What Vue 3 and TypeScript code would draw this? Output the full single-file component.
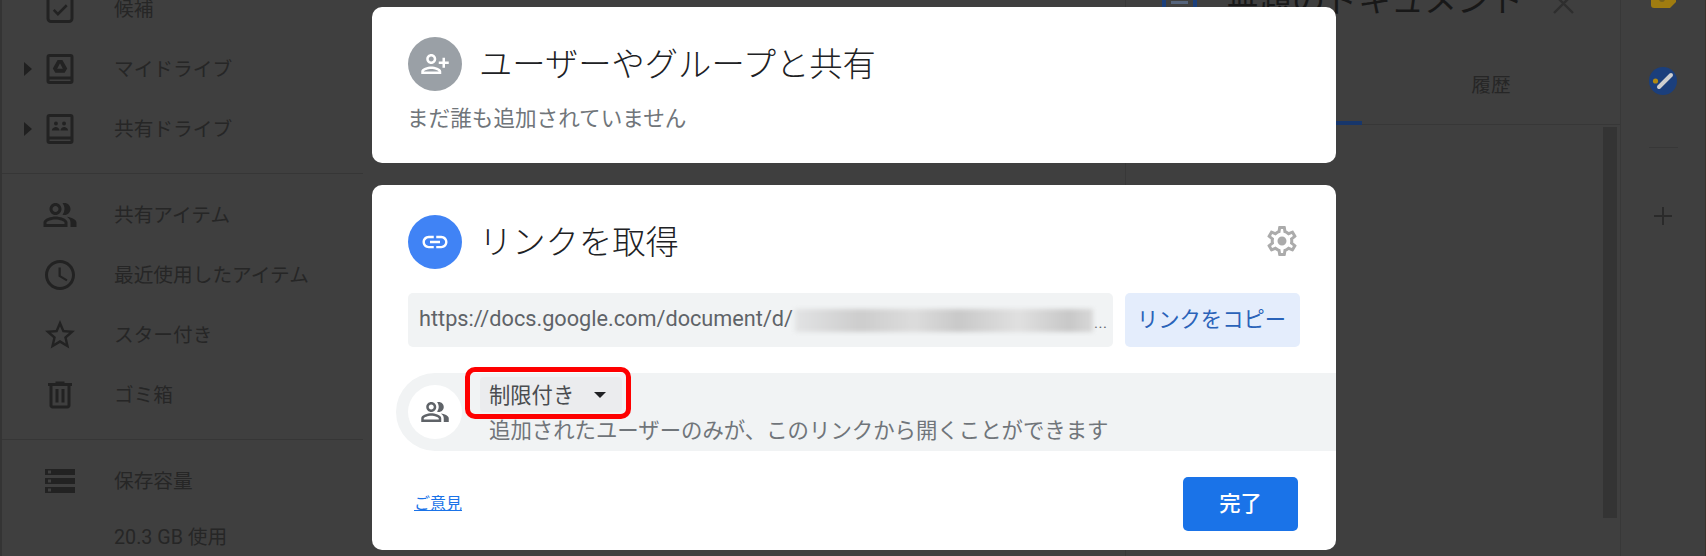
<script setup lang="ts">
interface NavRow {
  label: string
  icon: string
  caret?: boolean
}

const checkIcon =
  'M6 2.6h12a3 3 0 0 1 3 3v12.8a3 3 0 0 1-3 3H6a3 3 0 0 1-3-3V5.6a3 3 0 0 1 3-3zm0 2a1 1 0 0 0-1 1v12.8a1 1 0 0 0 1 1h12a1 1 0 0 0 1-1V5.6a1 1 0 0 0-1-1H6zm4.6 9.6l5.3-5.3 1.2 1.2-6.5 6.5-3.4-3.4 1.2-1.2z'
const driveBox =
  'M5 2h14a2 2 0 0 1 2 2v16a2 2 0 0 1-2 2H5a2 2 0 0 1-2-2V4a2 2 0 0 1 2-2zm0 2v13h14V4H5zm0 15v1h14v-1H5z'
const myDriveIcon = driveBox + 'M10.4 6h3.2l3.2 5.7-1.7 2.8H8.9l-1.7-2.8zM12 8.2l-1.9 3.6h3.8z'
const sharedDriveIcon =
  driveBox +
  'M9.3 7a1.3 1.3 0 1 1 0 2.6 1.3 1.3 0 0 1 0-2.6zm5.4 0a1.3 1.3 0 1 1 0 2.6 1.3 1.3 0 0 1 0-2.6zM6.6 13c0-1.5 1.8-2.3 2.7-2.3s2.4.8 2.4 2.3zm5.7 0c0-1.5 1.5-2.3 2.4-2.3s2.7.8 2.7 2.3z'
const peopleIcon =
  'M15 8c0-1.42-.5-2.73-1.33-3.76.42-.14.86-.24 1.33-.24 2.21 0 4 1.79 4 4s-1.79 4-4 4c-.43 0-.84-.09-1.23-.21-.03-.01-.06-.02-.1-.03A5.98 5.98 0 0 0 15 8zm1.66 5.13C18.03 14.06 19 15.32 19 17v3h4v-3c0-2.18-3.58-3.47-6.34-3.87zM9 6c-1.1 0-2 .9-2 2s.9 2 2 2 2-.9 2-2-.9-2-2-2m0 9c-2.7 0-5.8 1.29-6 2.01V18h12v-1c-.2-.71-3.3-2-6-2M9 4c2.21 0 4 1.79 4 4s-1.79 4-4 4-4-1.79-4-4 1.79-4 4-4zm0 9c2.67 0 8 1.34 8 4v3H1v-3c0-2.66 5.33-4 8-4z'
const clockIcon =
  'M11.99 2C6.47 2 2 6.48 2 12s4.47 10 9.99 10C17.52 22 22 17.52 22 12S17.52 2 11.99 2zM12 20c-4.42 0-8-3.58-8-8s3.58-8 8-8 8 3.58 8 8-3.58 8-8 8zm.5-13H11v6l5.25 3.15.75-1.23-4.5-2.67z'
const starIcon =
  'M22 9.24l-7.19-.62L12 2 9.19 8.63 2 9.24l5.46 4.73L5.82 21 12 17.27 18.18 21l-1.63-7.03L22 9.24zM12 15.4l-3.76 2.27 1-4.28-3.32-2.88 4.38-.38L12 6.1l1.71 4.04 4.38.38-3.32 2.88 1 4.28L12 15.4z'
const trashIcon =
  'M15 4V3H9v1H4v2h1v13c0 1.1.9 2 2 2h10c1.1 0 2-.9 2-2V6h1V4h-5zm2 15H7V6h10v13zM9 8h2v9H9zm4 0h2v9h-2z'
const storageIcon =
  'M2 20h20v-4H2v4zm2-3h2v2H4v-2zM2 4v4h20V4H2zm4 3H4V5h2v2zm-4 7h20v-4H2v4zm2-3h2v2H4v-2z'
const personAddIcon =
  'M15 12c2.21 0 4-1.79 4-4s-1.79-4-4-4-4 1.79-4 4 1.79 4 4 4zm0-6c1.1 0 2 .9 2 2s-.9 2-2 2-2-.9-2-2 .9-2 2-2zm0 8c-2.67 0-8 1.34-8 4v2h16v-2c0-2.66-5.33-4-8-4zm-6 4c.22-.72 3.31-2 6-2 2.7 0 5.8 1.29 6 2H9zm-3-3v-3h3v-2H6V7H4v3H1v2h3v3z'
const linkIcon =
  'M3.9 12c0-1.71 1.39-3.1 3.1-3.1h4V7H7c-2.76 0-5 2.24-5 5s2.24 5 5 5h4v-1.9H7c-1.71 0-3.1-1.39-3.1-3.1zM8 13h8v-2H8v2zm9-6h-4v1.9h4c1.71 0 3.1 1.39 3.1 3.1s-1.39 3.1-3.1 3.1h-4V17h4c2.76 0 5-2.24 5-5s-2.24-5-5-5z'
const gearIcon =
  'M19.43 12.98c.04-.32.07-.64.07-.98 0-.34-.03-.66-.07-.98l2.11-1.65c.19-.15.24-.42.12-.64l-2-3.46c-.09-.16-.26-.25-.44-.25-.06 0-.12.01-.17.03l-2.49 1c-.52-.4-1.08-.73-1.69-.98l-.38-2.65C14.46 2.18 14.25 2 14 2h-4c-.25 0-.46.18-.49.42l-.38 2.65c-.61.25-1.17.59-1.69.98l-2.49-1c-.06-.02-.12-.03-.18-.03-.17 0-.34.09-.43.25l-2 3.46c-.13.22-.07.49.12.64l2.11 1.65c-.04.32-.07.65-.07.98 0 .33.03.66.07.98l-2.11 1.65c-.19.15-.24.42-.12.64l2 3.46c.09.16.26.25.44.25.06 0 .12-.01.17-.03l2.49-1c.52.4 1.08.73 1.69.98l.38 2.65c.03.24.24.42.49.42h4c.25 0 .46-.18.49-.42l.38-2.65c.61-.25 1.17-.59 1.69-.98l2.49 1c.06.02.12.03.18.03.17 0 .34-.09.43-.25l2-3.46c.12-.22.07-.49-.12-.64l-2.11-1.65zm-1.98-1.71c.04.31.05.52.05.73 0 .21-.02.43-.05.73l-.14 1.13.89.7 1.08.84-.7 1.21-1.27-.51-1.04-.42-.9.68c-.43.32-.84.56-1.25.73l-1.06.43-.16 1.13-.2 1.35h-1.4l-.19-1.35-.16-1.13-1.06-.43c-.43-.18-.83-.41-1.23-.71l-.91-.7-1.06.43-1.27.51-.7-1.21 1.08-.84.89-.7-.14-1.13c-.03-.31-.05-.54-.05-.74s.02-.43.05-.73l.14-1.13-.89-.7-1.08-.84.7-1.21 1.27.51 1.04.42.9-.68c.43-.32.84-.56 1.25-.73l1.06-.43.16-1.13.2-1.35h1.39l.19 1.35.16 1.13 1.06.43c.43.18.83.41 1.23.71l.91.7 1.06-.43 1.27-.51.7 1.21-1.07.85-.89.7.14 1.13zM12 9a3 3 0 1 1 0 6 3 3 0 0 1 0-6z'

const topRows: NavRow[] = [
  { label: '候補', icon: checkIcon },
  { label: 'マイドライブ', icon: myDriveIcon, caret: true },
  { label: '共有ドライブ', icon: sharedDriveIcon, caret: true },
]
const midRows: NavRow[] = [
  { label: '共有アイテム', icon: peopleIcon },
  { label: '最近使用したアイテム', icon: clockIcon },
  { label: 'スター付き', icon: starIcon },
  { label: 'ゴミ箱', icon: trashIcon },
]
</script>

<template>
  <div class="page">
    <aside class="sidebar">
      <div class="nav-group first">
        <div v-for="row in topRows" :key="row.label" class="nav-row">
          <span class="caret-slot"><i v-if="row.caret" class="caret-right"></i></span>
          <svg class="nav-icon" viewBox="0 0 24 24"><path :d="row.icon" fill-rule="evenodd" /></svg>
          <span>{{ row.label }}</span>
        </div>
      </div>
      <div class="divider"></div>
      <div class="nav-group">
        <div v-for="row in midRows" :key="row.label" class="nav-row">
          <span class="caret-slot"></span>
          <svg class="nav-icon" viewBox="0 0 24 24"><path :d="row.icon" fill-rule="evenodd" /></svg>
          <span>{{ row.label }}</span>
        </div>
      </div>
      <div class="divider"></div>
      <div class="nav-group">
        <div class="nav-row">
          <span class="caret-slot"></span>
          <svg class="nav-icon" viewBox="0 0 24 24"><path :d="storageIcon" fill-rule="evenodd" /></svg>
          <span>保存容量</span>
        </div>
        <div class="storage-used">20.3 GB 使用</div>
      </div>
    </aside>

    <main class="doc-area"></main>

    <section class="panel">
      <header class="panel-head">
        <svg class="doc-icon" viewBox="0 0 35 44">
          <rect x="2" y="2" width="31" height="40" rx="2" fill="none" stroke="#1b3f7c" stroke-width="4" />
          <rect x="9" y="24" width="17" height="3" fill="#55647c" />
          <rect x="9" y="31" width="17" height="3" fill="#55647c" />
        </svg>
        <span class="panel-title">無題のドキュメント</span>
        <svg class="close-icon" viewBox="0 0 21 21">
          <path d="M1 1l19 19M20 1L1 20" stroke="#2e2e2e" stroke-width="2.4" fill="none" />
        </svg>
      </header>
      <div class="tabs">
        <div class="tab active"></div>
        <div class="tab">履歴</div>
      </div>
      <div class="panel-body"><div class="scrollbar"></div></div>
    </section>

    <nav class="rail">
      <svg class="keep-icon" viewBox="0 0 25 24">
        <path d="M0 0h25v18l-6 6H3a3 3 0 0 1-3-3z" fill="#a07c10" />
        <circle cx="11" cy="15" r="3" fill="#77621c" />
      </svg>
      <svg class="tasks-icon" viewBox="0 0 28 28">
        <circle cx="14" cy="14" r="14" fill="#1b3f7c" />
        <path d="M10 20L22 8" stroke="#cfcfcf" stroke-width="4" stroke-linecap="round" />
        <circle cx="6.5" cy="14" r="2.6" fill="#b08a12" />
      </svg>
      <div class="rail-divider"></div>
      <svg class="plus-icon" viewBox="0 0 18 18">
        <path d="M9 0v18M0 9h18" stroke="#2a2a2a" stroke-width="2" fill="none" />
      </svg>
    </nav>

    <div class="dialog">
      <section class="card share-card">
        <div class="card-head">
          <span class="avatar grey">
            <svg viewBox="0 0 24 24"><path :d="personAddIcon" transform="matrix(-1 0 0 1 24 0)" fill="#fff" /></svg>
          </span>
          <h2>ユーザーやグループと共有</h2>
        </div>
        <p class="nobody">まだ誰も追加されていません</p>
      </section>

      <section class="card link-card">
        <div class="card-head">
          <span class="avatar blue">
            <svg viewBox="0 0 24 24"><path :d="linkIcon" fill="#fff" /></svg>
          </span>
          <h2>リンクを取得</h2>
          <svg class="gear" viewBox="0 0 24 24"><path :d="gearIcon" fill="#ababab" fill-rule="evenodd" /></svg>
        </div>

        <div class="url-row">
          <div class="url-box">
            <span class="url-text">https://docs.google.com/document/d/</span>
            <span class="url-mask"><i></i></span>
            <span class="url-dots">...</span>
          </div>
          <button class="copy-btn">リンクをコピー</button>
        </div>

        <div class="access-row">
          <span class="avatar white">
            <svg viewBox="0 0 24 24"><path :d="peopleIcon" fill="#5f6368" fill-rule="evenodd" /></svg>
          </span>
          <div class="access-text">
            <div class="access-chip">
              <span>制限付き</span>
              <i class="caret-down"></i>
            </div>
            <div class="access-desc">追加されたユーザーのみが、このリンクから開くことができます</div>
          </div>
        </div>

        <footer class="card-foot">
          <a class="feedback">ご意見</a>
          <button class="done-btn">完了</button>
        </footer>
      </section>
    </div>
  </div>
</template>

<style>
html,
body {
  margin: 0;
  background: #3f3f3f;
}
</style>

<style scoped>
.page {
  position: relative;
  width: 1706px;
  height: 556px;
  overflow: hidden;
  display: flex;
  background: #3f3f3f;
  color: #262626;
  font-family: 'Noto Sans CJK JP', 'Noto Sans', sans-serif;
  border-right: 1px solid #3a322c;
  box-sizing: border-box;
}

/* left nav */
.sidebar {
  width: 363px;
  flex-shrink: 0;
  border-left: 2px solid #343434;
  box-sizing: border-box;
  font-size: 19.7px;
}
.nav-group.first {
  margin-top: -21px;
}
.nav-row {
  height: 60px;
  display: flex;
  align-items: center;
}
.nav-row span:last-child {
  margin-top: -3px;
}
.caret-slot {
  width: 40px;
  display: flex;
  justify-content: flex-end;
  padding-right: 10px;
  box-sizing: border-box;
}
.caret-right {
  width: 0;
  height: 0;
  border-left: 8px solid #202020;
  border-top: 7px solid transparent;
  border-bottom: 7px solid transparent;
}
.nav-icon {
  width: 36px;
  height: 36px;
  margin-right: 36px;
  fill: #222;
}
.divider {
  height: 1px;
  background: #363636;
  margin: 14px 0 11px;
}
.storage-used {
  height: 56px;
  line-height: 54px;
  margin-left: 112px;
  font-family: 'Roboto', 'Noto Sans CJK JP', sans-serif;
  font-size: 19.7px;
}

.doc-area {
  width: 762px;
  flex-shrink: 0;
}

/* right side panel */
.panel {
  width: 495px;
  flex-shrink: 0;
  border-left: 1px solid #383838;
  box-sizing: border-box;
  display: flex;
  flex-direction: column;
}
.panel-head {
  height: 44px;
  margin-top: -24px;
  flex-shrink: 0;
  display: flex;
  align-items: center;
  padding-left: 36px;
}
.doc-icon {
  width: 35px;
  height: 44px;
  margin-top: -12px;
  margin-right: 29px;
}
.panel-title {
  font-size: 33px;
  line-height: 44px;
  color: #181818;
  white-space: nowrap;
}
.close-icon {
  width: 21px;
  height: 21px;
  margin-left: 30px;
  margin-top: 10px;
}
.tabs {
  margin-top: 24px;
  height: 80px;
  flex-shrink: 0;
  display: flex;
  border-bottom: 1px solid #373737;
}
.tab {
  flex: 1;
  text-align: center;
  font-size: 19.7px;
  line-height: 80px;
}
.tab.active {
  flex: none;
  width: 236px;
  height: 81px;
  border-bottom: 4px solid #17366b;
  box-sizing: border-box;
}
.panel-body {
  flex: 1;
  display: flex;
  justify-content: flex-end;
  padding: 2px 3px 0 0;
}
.scrollbar {
  width: 14px;
  height: 391px;
  background: #343434;
}

/* far right rail */
.rail {
  flex: 1;
  border-left: 1px solid #383838;
  display: flex;
  flex-direction: column;
  align-items: center;
}
.keep-icon {
  width: 25px;
  height: 24px;
  margin-top: -16px;
}
.tasks-icon {
  width: 28px;
  height: 28px;
  margin-top: 59px;
}
.rail-divider {
  width: 29px;
  height: 1px;
  background: #373737;
  margin-top: 52px;
}
.plus-icon {
  width: 18px;
  height: 18px;
  margin-top: 59px;
}

/* share dialog on top of everything */
.dialog {
  position: absolute;
  left: 372px;
  top: 7px;
  width: 964px;
  display: flex;
  flex-direction: column;
  gap: 22px;
}
.card {
  background: #fff;
  border-radius: 10px;
  padding: 30px 36px 0;
  overflow: hidden;
}
.card-head {
  display: flex;
  align-items: center;
  gap: 17px;
}
.card-head h2 {
  margin: -5px 0 0;
  font-size: 33.3px;
  font-weight: 300;
  line-height: 44px;
  color: #202124;
}
.avatar {
  width: 54px;
  height: 54px;
  border-radius: 50%;
  flex-shrink: 0;
  display: flex;
  align-items: center;
  justify-content: center;
}
.avatar svg {
  width: 30px;
  height: 30px;
}
.avatar.grey {
  background: #9aa0a6;
}
.avatar.blue {
  background: #4083f5;
}
.avatar.white {
  background: #fff;
}
.nobody {
  margin: 12px 0 0 -1px;
  height: 60px;
  line-height: 28px;
  font-size: 21.6px;
  color: #70757a;
}
.gear {
  width: 36px;
  height: 36px;
  margin-left: auto;
  margin-top: -2px;
}
.url-row {
  display: flex;
  gap: 12px;
  margin-top: 24px;
}
.url-box {
  flex: 1;
  height: 54px;
  background: #f1f3f4;
  border-radius: 5px;
  display: flex;
  align-items: center;
  padding-left: 11px;
  font-family: 'Roboto', sans-serif;
  font-size: 21.7px;
  color: #5f6368;
  box-sizing: border-box;
}
.url-text {
  width: 376px;
  white-space: nowrap;
  margin-top: -3px;
}
.url-mask {
  width: 298px;
  height: 23px;
}
.url-mask i {
  display: block;
  height: 100%;
  background: linear-gradient(90deg, #e2e3e4, #cdcdcd 22%, #dcdcdc 40%, #c9c9c9 55%, #e0e0e0 75%, #c8c8c8 92%, #d8d8d8);
  filter: blur(2px);
}
.url-dots {
  font-size: 15px;
  margin: 6px 0 0 1px;
  letter-spacing: 0.5px;
}
.copy-btn {
  width: 175px;
  height: 54px;
  border: none;
  padding: 0 2px 5px 0;
  background: #e4edfc;
  border-radius: 5px;
  color: #2a63b9;
  font-family: inherit;
  font-size: 21.3px;
}
.access-row {
  display: flex;
  align-items: center;
  gap: 18px;
  height: 78px;
  margin: 26px -36px 0 -12px;
  padding-left: 12px;
  background: #f1f3f4;
  border-radius: 39px 0 0 39px;
}
.access-text {
  align-self: flex-start;
  padding-top: 4px;
}
.access-chip {
  position: relative;
  display: flex;
  align-items: center;
  width: 142px;
  height: 35px;
  padding: 0 0 2px 9px;
  box-sizing: border-box;
  background: #ebecee;
  border-radius: 4px;
  font-size: 21.3px;
  color: #4a4d50;
}
/* red highlight drawn by the screenshot's author */
.access-chip::after {
  content: '';
  position: absolute;
  left: -15px;
  right: -9px;
  top: -10px;
  bottom: -7px;
  border: 5px solid #fe0000;
  border-radius: 10px;
}
.caret-down {
  width: 0;
  height: 0;
  margin: 2px 0 0 20px;
  border-top: 6px solid #202124;
  border-left: 6px solid transparent;
  border-right: 6px solid transparent;
}
.access-desc {
  margin-top: -1px;
  padding-left: 9px;
  line-height: 36px;
  font-size: 21.4px;
  color: #70757a;
  white-space: nowrap;
}
.card-foot {
  display: flex;
  align-items: center;
  justify-content: space-between;
  margin-top: 26px;
  padding-bottom: 19px;
}
.feedback {
  margin-left: 6px;
  padding-bottom: 4px;
  font-size: 16px;
  color: #1a73e8;
  text-decoration: underline;
}
.done-btn {
  width: 115px;
  height: 54px;
  margin-right: 2px;
  border: none;
  padding: 0 0 5px;
  background: #1a73e8;
  border-radius: 5px;
  color: #fff;
  font-family: inherit;
  font-size: 21.3px;
  font-weight: 500;
}
</style>
